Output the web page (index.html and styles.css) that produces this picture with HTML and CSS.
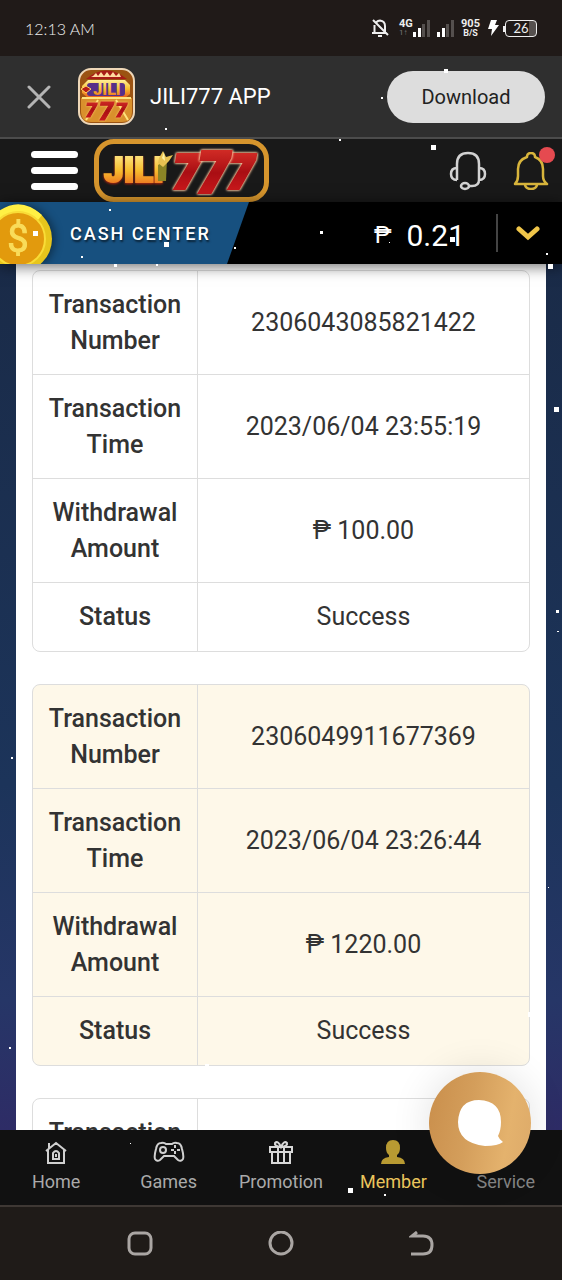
FILE: index.html
```
<!DOCTYPE html>
<html lang="en">
<head>
    <meta charset="UTF-8">
    <meta name="viewport" content="width=device-width, initial-scale=1.0">
    <title>JILI777 - Cash Center</title>
    <link rel="stylesheet" href="styles.css">
</head>
<body>
    <!-- phone status bar -->
    <div class="status-bar">
        <span class="clock">12:13 AM</span>
        <div class="status-icons">
            <svg class="mute" width="18" height="18" viewBox="0 0 18 18" fill="none" stroke="#eee" stroke-width="2">
                <path d="M5 3.5Q7 1.5 9 1.5Q14 2 14 7v6M3.5 6v8M1 14h14M7 17h4M2 1l15 15"/>
            </svg>
            <span class="net"><b>4G</b><i>1↑</i></span>
            <svg width="18" height="17" viewBox="0 0 18 17">
                <path fill="#fff" d="M1 12h3v5H1zM6 8h3v9H6z"/>
                <path fill="#55504e" d="M10 4h3v13h-3zM15 0h3v17h-3z"/>
            </svg>
            <svg class="sim2" width="18" height="17" viewBox="0 0 18 17">
                <path fill="#fff" d="M1 12h3v5H1zM6 8h3v9H6z"/>
                <path fill="#55504e" d="M10 4h3v13h-3zM15 0h3v17h-3z"/>
            </svg>
            <span class="speed">905<br><small>B/S</small></span>
            <svg class="bolt" width="11" height="16" viewBox="0 0 11 16" fill="#fff"><path d="M3 0h6L7 5h4L3 16l1-7H0z"/></svg>
            <span class="battery">26</span>
        </div>
    </div>

    <!-- app download banner -->
    <div class="app-banner">
        <button class="close" aria-label="Close">
            <svg width="24" height="24" viewBox="0 0 24 24" stroke="#b4b4b4" stroke-width="3" stroke-linecap="round"><path d="M2 2l20 20M22 2L2 22"/></svg>
        </button>
        <svg class="app-icon" width="57" height="57" viewBox="0 0 57 57">
            <defs>
                <linearGradient id="gold" x1="0" y1="0" x2="0" y2="1">
                    <stop offset="0" stop-color="#fff09a"/><stop offset=".5" stop-color="#f7bd2e"/><stop offset="1" stop-color="#e8561b"/>
                </linearGradient>
                <linearGradient id="red" x1="0" y1="0" x2="0" y2="1">
                    <stop offset="0" stop-color="#e0362c"/><stop offset=".5" stop-color="#a90e13"/><stop offset="1" stop-color="#d81d20"/>
                </linearGradient>
            </defs>
            <rect x="1" y="1" width="55" height="55" rx="12" fill="#9b5312" stroke="#eed7b8" stroke-width="2"/>
            <path d="M8 11Q28-6 49 11z" fill="#a81c17"/>
            <path d="M15 8l3-3 2 3 3-4 3 4 3-4 3 4 3-4 3 4 3-3 2 4H13z" fill="#ffdca0"/>
            <path d="M10 12h37l5 5v9l-5 4H10l-6-5v-7z" fill="url(#gold)"/>
            <rect x="9" y="15" width="38" height="13" rx="3" fill="#573089"/>
            <path d="M3 21l5-3 5 3-5 4z" fill="#b91b15" stroke="#ffd368"/>
            <path d="M3 30h51v14q0 10-10 10H13Q3 54 3 44z" fill="#d9902c"/>
            <path d="M4 30h49M8 52L20 32M50 52L38 32" stroke="#ffe37d" stroke-width="2"/>
            <text x="29" y="27" class="icon-jili">JILI</text>
            <text x="13" y="49" class="icon-seven">7</text>
            <text x="43" y="49" class="icon-seven">7</text>
            <text x="28" y="52" class="icon-seven big">7</text>
        </svg>
        <span class="app-name">JILI777 APP</span>
        <button class="download">Download</button>
    </div>

    <header class="header">
        <button class="menu" aria-label="Menu"><span></span><span></span><span></span></button>
        <a class="logo" href="#">
            <svg width="165" height="53" viewBox="0 0 165 53">
                <text x="5" y="38" class="logo-jili">JILI</text>
                <path d="M59 21l9-6-1 22h-8z" fill="#8b8526"/>
                <path d="M60 14l4-7 3 6 7-2-4 6-6 6-5-4z" fill="#e8c252"/>
                <path d="M63 14l2-6 1 9z" fill="#fff3a5"/>
                <text x="75" y="44" class="logo-seven">7</text>
                <text x="129" y="44" class="logo-seven">7</text>
                <text x="99" y="48" class="logo-seven big">7</text>
            </svg>
        </a>
        <a class="headset" href="#" aria-label="Support">
            <svg width="38" height="40" viewBox="0 0 38 40" fill="none" stroke="#d2d2d2" stroke-width="2.5">
                <path d="M8 29V13Q8 2 19 2T30 13v16M8 17Q2 17 2 23t6 6M30 17q6 0 6 6t-6 6q0 6-7 6h-4"/>
                <ellipse cx="16" cy="35" rx="4" ry="3"/>
            </svg>
        </a>
        <a class="bell" href="#" aria-label="Notifications">
            <svg width="36" height="38" viewBox="0 0 36 38" fill="none" stroke="#d8b53c" stroke-width="2.5" stroke-linejoin="round">
                <path d="M2 32Q5 29 5 24v-7Q5 8 14 5q0-4 4-4t4 4q8 3 8 12v7q0 5 4 8zM12 33q1 4 6 4t6-4"/>
            </svg>
            <span class="dot"></span>
        </a>
    </header>

    <div class="cash-bar">
        <div class="cash-title">
            <svg class="coin" width="53" height="62" viewBox="0 0 53 62">
                <circle cx="19" cy="37" r="33" fill="#e7c51c"/>
                <path d="M-5 12Q19-8 42 13l-4 5Q19 1-1 18z" fill="#fff044"/>
                <circle cx="18" cy="37" r="27" fill="#e29a0d" stroke="#f9dc37" stroke-width="2"/>
                <text x="18" y="50" class="coin-sign">$</text>
            </svg>
            <h1>CASH CENTER</h1>
        </div>
        <div class="balance"><span class="peso">₱</span><span class="amount">0.21</span></div>
        <button class="expand" aria-label="Expand balance">
            <svg width="24" height="16" viewBox="0 0 24 16" fill="none" stroke="#f0c64a" stroke-width="5" stroke-linecap="round"><path d="M3 4l9 8 9-8"/></svg>
        </button>
    </div>

    <main class="page">
        <div class="records">
            <table>
                <tr><th scope="row">Transaction Number</th><td>2306043085821422</td></tr>
                <tr><th scope="row">Transaction Time</th><td>2023/06/04 23:55:19</td></tr>
                <tr><th scope="row">Withdrawal Amount</th><td>₱ 100.00</td></tr>
                <tr><th scope="row">Status</th><td>Success</td></tr>
            </table>
            <table>
                <tr><th scope="row">Transaction Number</th><td>2306049911677369</td></tr>
                <tr><th scope="row">Transaction Time</th><td>2023/06/04 23:26:44</td></tr>
                <tr><th scope="row">Withdrawal Amount</th><td>₱ 1220.00</td></tr>
                <tr><th scope="row">Status</th><td>Success</td></tr>
            </table>
            <table>
                <tr><th scope="row">Transaction Number</th><td></td></tr>
            </table>
        </div>
    </main>

    <nav class="tabs">
        <a href="#">
            <svg width="24" height="24" viewBox="0 0 24 24" fill="none" stroke="#d0d0d0" stroke-width="2">
                <path d="M2 11l10-8 10 8M4 9v14h16V9M5 8V3M9 19v-6q3-4 6 0v6zM12 14v3"/>
            </svg>
            Home
        </a>
        <a href="#">
            <svg width="32" height="24" viewBox="0 0 32 24" fill="none" stroke="#d0d0d0" stroke-width="2">
                <path d="M8 3q3-1 5 1h6q2-2 5-1 4 0 5 6 2 7 1 10-2 3-5 1l-4-4H11l-4 4q-3 2-5-1-1-3 1-10 1-6 5-6z"/>
                <circle cx="10" cy="10" r="3"/>
                <path d="M22 5v3M22 11v3M18 10h3M24 10h3"/>
            </svg>
            Games
        </a>
        <a href="#">
            <svg width="26" height="24" viewBox="0 0 26 24" fill="none" stroke="#d8d8d8" stroke-width="2">
                <path d="M2 7h22v5H2zM4 12v11h18V12M10 7v16M16 7v16M13 7Q6 6 7 3q3-3 6 4 3-7 6-4 1 3-6 4"/>
            </svg>
            Promotion
        </a>
        <a href="#" class="active">
            <svg width="24" height="24" viewBox="0 0 24 24" fill="#b89a32">
                <path d="M12 0q7 0 7 8 0 5-3 7v2q8 1 8 7H0q0-6 8-7v-2Q5 13 5 8q0-8 7-8z"/>
            </svg>
            Member
        </a>
        <a href="#" class="service">
            <svg width="24" height="24" viewBox="0 0 24 24"></svg>
            Service
        </a>
        <button class="chat" aria-label="Open chat">
            <svg width="46" height="48" viewBox="0 0 46 48" fill="#fff"><path d="M22 1Q44 2 44 23q0 8-3 14 1 3 5 6-5 4-18 4Q1 44 1 23 2 1 22 1z"/></svg>
        </button>
    </nav>

    <div class="system-nav">
        <button aria-label="Recent apps"><svg width="26" height="26" viewBox="0 0 26 26"><rect x="2" y="2" width="22" height="21" rx="6"/></svg></button>
        <button aria-label="Home screen"><svg width="26" height="26" viewBox="0 0 26 26"><circle cx="13" cy="12" r="11"/></svg></button>
        <button aria-label="Back"><svg width="26" height="26" viewBox="0 0 26 26"><path d="M8 1L3 5h11q9 0 9 9 0 9-9 9H2"/></svg></button>
    </div>

    <!-- snow over the whole page -->
    <svg class="snow" width="562" height="1280" viewBox="0 0 562 1280" fill="#fff" aria-hidden="true">
        <path d="M431 145h5v5h-5zM444 69h4v4h-4zM33 231h5v5h-5zM164 242h5v5h-5zM450 237h5v5h-5zM548 264h5v5h-5zM554 407h5v5h-5zM528 1012h5v5h-5zM348 1188h5v5h-5z"/>
        <path d="M114 264h3v3h-3zM320 231h3v3h-3zM556 610h3v3h-3zM205 1064h4v3h-4zM382 323h3v3h-3zM313 735h3v3h-3z"/>
        <path d="M381 97h2v2h-2zM165 128h2v2h-2zM339 139h2v2h-2zM109 209h2v2h-2zM81 256h2v2h-2zM156 264h2v2h-2zM234 247h2v2h-2zM389 242h1v1h-1zM546 253h2v2h-2zM557 631h2v1h-2zM548 887h1v1h-1zM11 757h2v2h-2zM9 1047h2v2h-2zM130 1143h1v1h-1zM384 1194h2v2h-2z"/>
    </svg>
</body>
</html>
```

FILE: styles.css
```
* {
    margin: 0;
    padding: 0;
    box-sizing: border-box;
}

body {
    font-family: Roboto, "Liberation Sans", sans-serif;
    position: relative;
    height: 100vh;
    display: flex;
    flex-direction: column;
    overflow: hidden;
    background: #1f1b18;
    color: #333;
}

button {
    font-family: inherit;
    background: none;
    border: none;
    cursor: pointer;
}

a {
    text-decoration: none;
}

svg {
    display: block;
    flex: none;
}

/* status bar */
.status-bar {
    flex: none;
    height: 56px;
    padding: 0 25px;
    display: flex;
    align-items: center;
    justify-content: space-between;
    background: #201a18;
    color: #eee;
}

.clock {
    font-family: Lato, sans-serif;
    font-size: 16px;
    font-weight: 300;
}

.status-icons {
    display: flex;
    align-items: center;
}

.net {
    width: 13px;
    margin-left: 10px;
    font-size: 11px;
    line-height: 9px;
}

.net b,
.net i {
    display: block;
}

.net i {
    font-size: 8px;
    font-style: normal;
    color: #777;
}

.sim2 {
    margin-left: 6px;
}

.speed {
    margin-left: 7px;
    font-size: 11px;
    font-weight: 700;
    line-height: 9px;
    text-align: center;
}

.speed small {
    font-size: 9px;
}

.bolt {
    margin: 0 6px 0 8px;
}

.battery {
    position: relative;
    width: 32px;
    height: 17px;
    border: 1px solid #eee;
    border-radius: 4px;
    font-family: Lato, sans-serif;
    font-size: 13px;
    line-height: 15px;
    text-align: center;
    background: linear-gradient(90deg, transparent 76%, #55504e 76%);
}

.battery::before {
    content: "";
    position: absolute;
    left: -3px;
    top: 5px;
    width: 2px;
    height: 6px;
    background: #eee;
}

/* download banner */
.app-banner {
    flex: none;
    height: 83px;
    padding: 0 17px 0 27px;
    display: flex;
    align-items: center;
    background: #2f2f2f;
    border-bottom: 2px solid #4c4c4c;
}

.app-icon {
    margin: 0 15px 0 27px;
}

.app-name {
    font-size: 22px;
    color: #fff;
}

.download {
    width: 158px;
    height: 52px;
    margin-left: auto;
    border-radius: 26px;
    background: #ddd;
    color: #222;
    font-size: 20px;
}

.icon-jili,
.icon-seven {
    font-family: Roboto, sans-serif;
    font-weight: 900;
    text-anchor: middle;
    fill: url(#gold);
}

.icon-jili {
    font-size: 16px;
}

.icon-seven {
    font-size: 20px;
    font-style: italic;
    fill: url(#red);
    stroke: url(#red);
    stroke-width: 1px;
    filter: drop-shadow(0 0 1px #ffd070);
}

.icon-seven.big {
    font-size: 26px;
}

/* header */
.header {
    flex: none;
    height: 63px;
    padding: 0 13px 0 31px;
    display: flex;
    align-items: center;
    background: #191919;
}

.menu {
    width: 47px;
    display: flex;
    flex-direction: column;
    gap: 9px;
}

.menu span {
    height: 7px;
    border-radius: 4px;
    background: #fff;
}

.logo {
    margin-left: 16px;
    border: 5px solid #d6952d;
    border-radius: 20px;
}

.logo-jili,
.logo-seven {
    font-family: Roboto, sans-serif;
    font-weight: 900;
}

.logo-jili {
    font-size: 35px;
    fill: url(#gold);
    stroke: url(#gold);
    stroke-width: 2px;
    filter: drop-shadow(0 1px 1px #b3260f);
}

.logo-seven {
    font-size: 46px;
    font-style: italic;
    fill: url(#red);
    stroke: url(#red);
    stroke-width: 4px;
    filter: drop-shadow(0 0 1px #ffc9a0) drop-shadow(0 0 1px #ffc9a0);
}

.logo-seven.big {
    font-size: 55px;
}

.headset {
    margin-left: auto;
}

.bell {
    position: relative;
    margin-left: 26px;
}

.dot {
    position: absolute;
    top: -5px;
    right: -6px;
    width: 16px;
    height: 16px;
    border-radius: 50%;
    background: #e54a50;
}

/* cash center bar */
.cash-bar {
    flex: none;
    position: relative;
    z-index: 1;
    height: 62px;
    display: flex;
    align-items: center;
    background: #000;
    color: #fff;
    box-shadow: 0 2px 14px rgba(0, 0, 0, 0.6);
}

.cash-title {
    width: 249px;
    height: 62px;
    display: flex;
    align-items: center;
    gap: 17px;
    background: #17507f;
    clip-path: polygon(0 0, 100% 0, 227px 100%, 0 100%);
}

.cash-title h1 {
    font-size: 18px;
    font-weight: 500;
    letter-spacing: 2px;
    text-shadow: 1px 2px 2px rgba(0, 0, 0, 0.6);
}

.coin {
    filter: drop-shadow(3px 0 4px rgba(0, 0, 0, 0.4));
}

.coin-sign {
    font-size: 38px;
    text-anchor: middle;
    fill: #f9dc5a;
    stroke: #f9dc5a;
}

.balance {
    margin-left: auto;
    padding: 4px 31px 0 0;
    height: 38px;
    display: flex;
    align-items: center;
    gap: 15px;
    border-right: 2px solid #444;
}

.peso {
    font-size: 24px;
}

.amount {
    font-size: 30px;
}

.expand {
    width: 64px;
    padding-left: 18px;
}

/* transaction records */
.page {
    flex: 1;
    min-height: 0;
    overflow: hidden;
    padding: 0 16px;
    background: linear-gradient(#1a2b48, #1c345a 60%, #263667 85%, #2e2c66);
}

.records {
    padding: 6px 16px 0;
    display: flex;
    flex-direction: column;
    gap: 32px;
    background: #fff;
}

.records table {
    width: 100%;
    table-layout: fixed;
    border: 1px solid #ddd;
    border-radius: 8px;
    border-spacing: 0;
    overflow: hidden;
    font-size: 25px;
    line-height: 36px;
    text-align: center;
}

.records table:nth-child(even) {
    background: #fef8e9;
}

.records th,
.records td {
    height: 104px;
    border-bottom: 1px solid #ddd;
}

.records th {
    width: 165px;
    padding: 0 12px;
    border-right: 1px solid #ddd;
    font-weight: 500;
}

.records tr:nth-child(4) th,
.records tr:nth-child(4) td {
    height: 68px;
    border-bottom: none;
}

/* bottom tabs */
.tabs {
    flex: none;
    position: relative;
    z-index: 1;
    height: 75px;
    padding-top: 10px;
    display: grid;
    grid-template-columns: repeat(5, 1fr);
    background: #111;
}

.tabs a {
    display: flex;
    flex-direction: column;
    align-items: center;
    gap: 6px;
    font-size: 18px;
    line-height: 24px;
    color: #aaa;
}

.tabs .active {
    color: #eac55c;
}

.tabs .service {
    color: #858585;
}

.chat {
    position: absolute;
    right: 31px;
    bottom: 31px;
    width: 102px;
    height: 102px;
    border-radius: 50%;
    display: flex;
    align-items: center;
    justify-content: center;
    background: linear-gradient(100deg, #c98e4b, #d49e5b 40%, #e4b26d 75%, #ddaa69);
    box-shadow: 0 0 40px rgba(0, 0, 0, 0.12);
}

/* android buttons */
.system-nav {
    flex: none;
    height: 75px;
    padding: 0 70px;
    display: grid;
    grid-template-columns: repeat(3, 1fr);
    border-top: 2px solid #3e3834;
    background: #1f1b18;
}

.system-nav button {
    display: flex;
    align-items: center;
    justify-content: center;
}

.system-nav svg {
    fill: none;
    stroke: #aaa6a3;
    stroke-width: 3;
}

.snow {
    position: absolute;
    top: 0;
    left: 0;
    z-index: 2;
    pointer-events: none;
}
```
